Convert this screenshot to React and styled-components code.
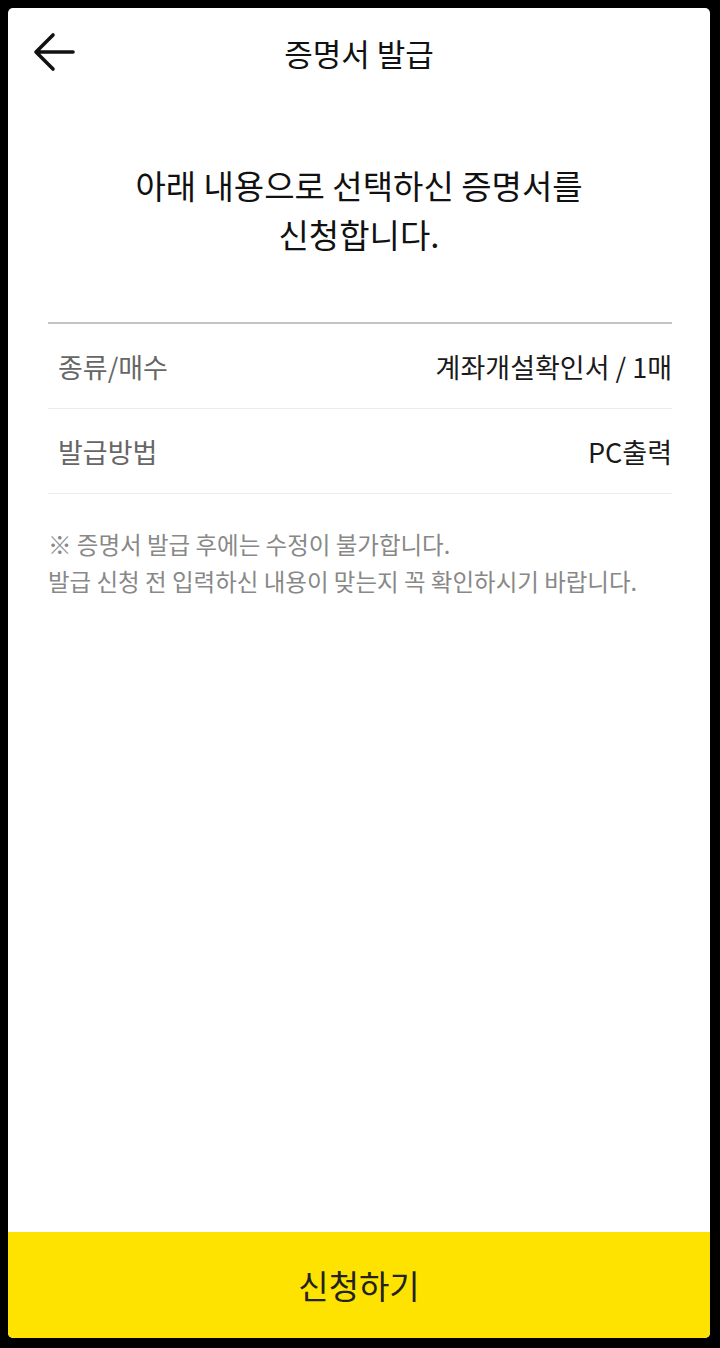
import React from "react";
import styled, { createGlobalStyle } from "styled-components";

const GlobalStyle = createGlobalStyle`
  html, body {
    margin: 0;
    padding: 0;
    background: #000;
  }
  body {
    font-family: "Noto Sans CJK KR", "Noto Sans", sans-serif;
  }
`;

const Frame = styled.div`
  width: 720px;
  height: 1348px;
  box-sizing: border-box;
  padding: 8px 10px 10px 8px;
  background: #000;
`;

const Panel = styled.div`
  height: 100%;
  display: flex;
  flex-direction: column;
  background: #fff;
  border-radius: 5px;
  overflow: hidden;
`;

const Header = styled.header`
  position: relative;
  height: 88px;
  display: flex;
  align-items: center;
  justify-content: center;
`;

const BackButton = styled.button`
  position: absolute;
  left: 24px;
  top: 22px;
  width: 44px;
  height: 44px;
  padding: 0;
  border: 0;
  background: none;
  display: flex;
  align-items: center;
  justify-content: center;
`;

const Title = styled.h1`
  margin: 0;
  font-size: 31px;
  font-weight: 400;
  color: #111;
`;

const Lead = styled.p`
  margin: 65px 0 0;
  text-align: center;
  font-size: 33px;
  line-height: 49px;
  color: #111;
`;

const List = styled.dl`
  margin: 63px 38px 0 40px;
  border-top: 2px solid #c4c4c4;
`;

const Row = styled.div`
  height: 84px;
  display: flex;
  align-items: center;
  justify-content: space-between;
  padding-left: 10px;
  border-bottom: 1px solid #ececec;
`;

const Label = styled.dt`
  font-size: 27px;
  color: #666;
`;

const Value = styled.dd`
  margin: 0;
  font-size: 27px;
  color: #1a1a1a;
`;

const Notes = styled.div`
  margin: 32px 0 0 40px;
  font-size: 23.5px;
  line-height: 37px;
  color: #888;
`;

const SubmitButton = styled.button`
  margin-top: auto;
  height: 106px;
  border: 0;
  background: #ffe300;
  font-family: inherit;
  font-size: 33px;
  color: #222;
`;

function ArrowLeft() {
  return (
    <svg width="42" height="40" viewBox="0 0 42 40" fill="none">
      <path
        d="M40 20H5M20 3L3 20L20 37"
        stroke="#111"
        strokeWidth="3.6"
        strokeLinecap="round"
        strokeLinejoin="round"
      />
    </svg>
  );
}

const rows = [
  { label: "종류/매수", value: "계좌개설확인서 / 1매" },
  { label: "발급방법", value: "PC출력" }
];

export default function App() {
  return (
    <Frame>
      <GlobalStyle />
      <Panel>
        <Header>
          <BackButton aria-label="뒤로">
            <ArrowLeft />
          </BackButton>
          <Title>증명서 발급</Title>
        </Header>
        <Lead>
          아래 내용으로 선택하신 증명서를
          <br />
          신청합니다.
        </Lead>
        <List>
          {rows.map(row => (
            <Row key={row.label}>
              <Label>{row.label}</Label>
              <Value>{row.value}</Value>
            </Row>
          ))}
        </List>
        <Notes>
          ※ 증명서 발급 후에는 수정이 불가합니다.
          <br />
          발급 신청 전 입력하신 내용이 맞는지 꼭 확인하시기 바랍니다.
        </Notes>
        <SubmitButton>신청하기</SubmitButton>
      </Panel>
    </Frame>
  );
}
